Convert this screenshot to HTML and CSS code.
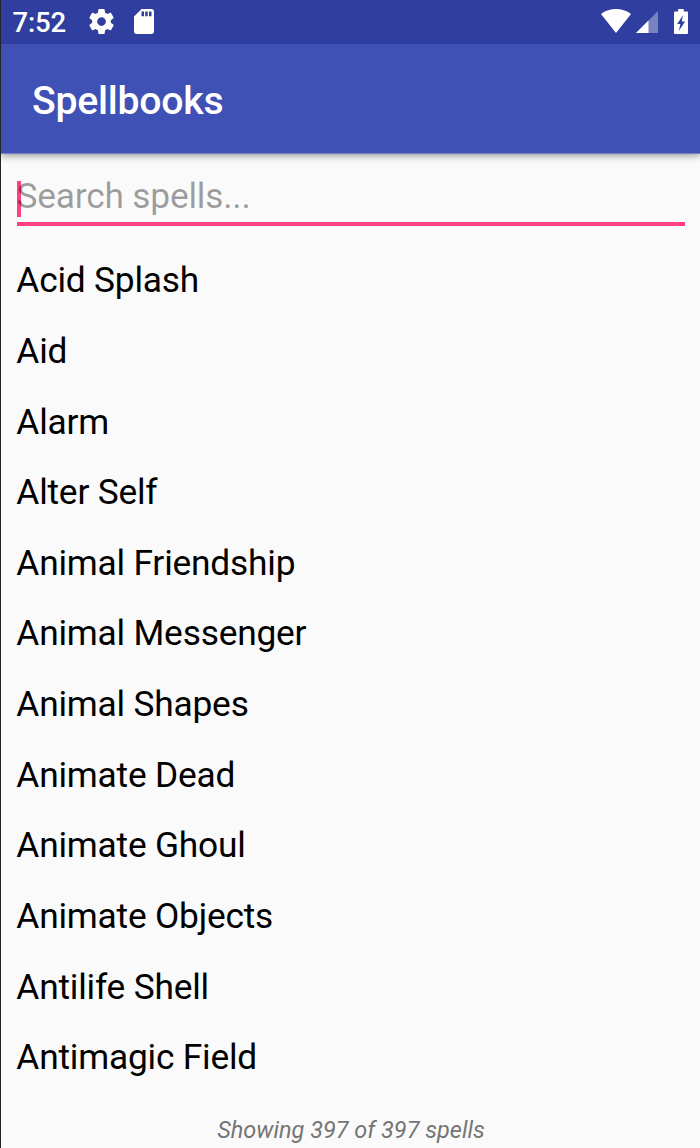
FILE: index.html
```
<!DOCTYPE html>
<html lang="en">
<head>
<meta charset="utf-8">
<title>Spellbooks</title>
<link rel="stylesheet" href="styles.css">
</head>
<body>
<div class="screen">
  <header class="status">
    <span class="time">7:52</span>
    <svg class="gear" viewBox="2 2 20 20"><path fill="#fff" d="M19.43 12.98c.04-.32.07-.64.07-.98s-.03-.66-.07-.98l2.11-1.65c.19-.15.24-.42.12-.64l-2-3.46c-.12-.22-.39-.3-.61-.22l-2.49 1c-.52-.4-1.08-.73-1.69-.98l-.38-2.65C14.46 2.18 14.25 2 14 2h-4c-.25 0-.46.18-.49.42l-.38 2.65c-.61.25-1.17.59-1.69.98l-2.49-1c-.23-.09-.49 0-.61.22l-2 3.46c-.13.22-.07.49.12.64l2.11 1.65c-.04.32-.07.65-.07.98s.03.66.07.98l-2.11 1.65c-.19.15-.24.42-.12.64l2 3.46c.12.22.39.3.61.22l2.49-1c.52.4 1.08.73 1.69.98l.38 2.65c.03.24.24.42.49.42h4c.25 0 .46-.18.49-.42l.38-2.65c.61-.25 1.17-.59 1.69-.98l2.49 1c.23.09.49 0 .61-.22l2-3.46c.12-.22.07-.49-.12-.64l-2.11-1.65zM12 15.500a3.500 3.500 0 1 1 0-7 3.500 3.500 0 0 1 0 7z"/></svg>
    <svg class="card" viewBox="4 2 16 20" preserveAspectRatio="none"><path fill="#fff" d="M18 2h-8L4.020 8 4 20c0 1.100.9 2 2 2h12c1.100 0 2-.9 2-2V4c0-1.100-.9-2-2-2zm-6 5.800h-2V4h2v3.800zm3 0h-2V4h2v3.800zm3 0h-2V4h2v3.800z"/></svg>
    <svg class="wifi" viewBox="0 0 30 24"><path fill="#fff" d="M15 24 .4 5.500Q0 5 .6 4.500C4.600 1.600 9.500 0 15 0s10.400 1.600 14.400 4.500q.6.500.2 1z"/></svg>
    <svg class="signal" viewBox="0 0 22 22"><path fill="#fff" fill-opacity=".35" d="M0 22 22 0v22z"/><path fill="#fff" d="M0 22 12.500 9.500V22z"/></svg>
    <svg class="battery" viewBox="0 0 14 25"><path fill="#fff" d="M4.200 0h5.600v2.600h3.200q1 0 1 1V24q0 1-1 1H1q-1 0-1-1V3.600q0-1 1-1h3.200z"/><path fill="#303f9f" d="M8.900 6.200 3.200 14.900h3.200l-1.600 7 6.300-9.500H7.800z"/></svg>
  </header>
  <div class="appbar"><h1 class="title">Spellbooks</h1></div>
  <main class="content">
    <div class="search"><span class="caret"></span><span class="hint">Search spells...</span></div>
    <ul class="spells">
      <li class="spell">Acid Splash</li>
      <li class="spell">Aid</li>
      <li class="spell">Alarm</li>
      <li class="spell">Alter Self</li>
      <li class="spell">Animal Friendship</li>
      <li class="spell">Animal Messenger</li>
      <li class="spell">Animal Shapes</li>
      <li class="spell">Animate Dead</li>
      <li class="spell">Animate Ghoul</li>
      <li class="spell">Animate Objects</li>
      <li class="spell">Antilife Shell</li>
      <li class="spell">Antimagic Field</li>
    </ul>
    <p class="count">Showing 397 of 397 spells</p>
  </main>
</div>
</body>
</html>
```
FILE: styles.css
```
* { box-sizing: border-box; }
body { margin: 0; background: #fafafa; }
.screen {
  display: flex;
  flex-direction: column;
  height: 1148px;
  overflow: hidden;
  border-left: 1px solid #252528;
  font-family: Roboto, sans-serif;
  color: #000;
}
.status {
  position: relative;
  z-index: 1;
  display: flex;
  align-items: flex-start;
  flex: none;
  height: 44px;
  padding: 0 12px 0 11.500px;
  background: #303f9f;
}
.time {
  width: 76.500px;
  color: #fff;
  font-size: 27.500px;
  font-weight: 500;
  letter-spacing: -.15px;
  line-height: 45px;
}
.gear { width: 25px; height: 25px; margin-top: 9px; }
.card { width: 20px; height: 25px; margin: 9px 0 0 20px; }
.wifi { width: 30px; height: 24px; margin: 9px 0 0 auto; }
.signal { width: 22px; height: 22px; margin: 11px 0 0 5px; }
.battery { width: 14px; height: 25px; margin: 9px 0 0 16px; }
.appbar {
  position: relative;
  display: flex;
  align-items: center;
  flex: none;
  height: 110px;
  padding: 4px 0 0 31px;
  background: #3f51b5;
  border-bottom: 1px solid #7481ca;
  box-shadow: 0 2px 7px rgba(0, 0, 0, .38);
}
.title {
  margin: 0;
  color: #fff;
  font-size: 39.200px;
  font-weight: 500;
  letter-spacing: -.25px;
  line-height: 46px;
}
.content { padding: 21px 15px 0 16px; }
.search {
  position: relative;
  height: 50.500px;
  border-bottom: 4px solid #ff4081;
}
.hint {
  position: relative;
  display: block;
  margin-left: -.5px;
  color: rgba(0, 0, 0, .38);
  font-size: 35.300px;
  letter-spacing: -.2px;
  line-height: 42px;
}
.caret {
  position: absolute;
  left: 0;
  top: 6px;
  width: 3.500px;
  height: 36px;
  background: #ff4081;
}
.spells {
  margin: 0 0 0 -.7px;
  padding: 19.500px 0 0;
  list-style: none;
}
.spell {
  display: flex;
  align-items: center;
  height: 70.640px;
  font-size: 35.300px;
  letter-spacing: -.2px;
}
.count {
  margin: 23.500px 0 0;
  color: #757575;
  font-size: 23.500px;
  font-style: italic;
  line-height: 28px;
  text-align: center;
}
```
